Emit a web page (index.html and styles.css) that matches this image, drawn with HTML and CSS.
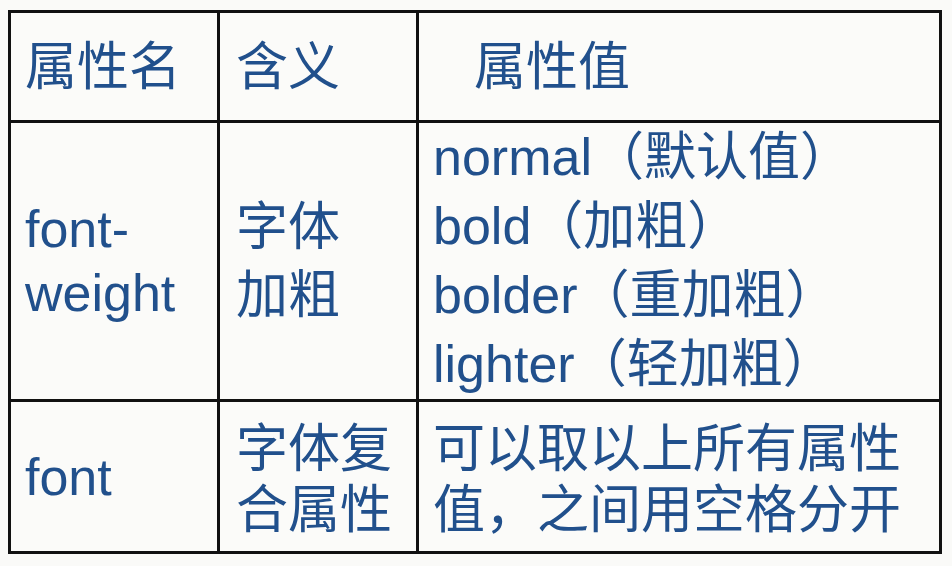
FILE: index.html
```html
<!DOCTYPE html>
<html lang="zh-CN">
<head>
<meta charset="utf-8">
<title>font-weight</title>
<link rel="stylesheet" href="styles.css">
</head>
<body>
<table class="props">
  <colgroup>
    <col class="c1">
    <col class="c2">
    <col class="c3">
  </colgroup>
  <tr class="head">
    <td class="p1">属性名</td>
    <td class="p2">含义</td>
    <td class="p3 indent">属性值</td>
  </tr>
  <tr class="r2">
    <td class="p1 lh64">font-<br>weight</td>
    <td class="p2 lh68">字体<br>加粗</td>
    <td class="p3 lh69">normal（默认值）<br>bold（加粗）<br>bolder（重加粗）<br>lighter（轻加粗）</td>
  </tr>
  <tr class="r3">
    <td class="p1">font</td>
    <td class="p2 lh61 low">字体复<br>合属性</td>
    <td class="p3 lh61 low">可以取以上所有属性<br>值，之间用空格分开</td>
  </tr>
</table>
</body>
</html>
```

FILE: styles.css
```css
html, body {
  margin: 0;
  padding: 0;
  background: #fafaf8;
}

body {
  padding: 10px 0 0 8px;
  font-family: "Liberation Sans", "Noto Sans CJK SC", sans-serif;
  color: #21508c;
}

.props {
  border-collapse: collapse;
  table-layout: fixed;
  width: 931px;
  background: #fbfbf9;
  font-size: 52px;
}

.props col.c1 { width: 209px; }
.props col.c2 { width: 199px; }
.props col.c3 { width: 523px; }

.props td {
  border: 3px solid #111;
  vertical-align: middle;
  padding: 0;
  white-space: nowrap;
  line-height: 60px;
}

.props tr.head { height: 110px; }
.props tr.r2 { height: 279px; }
.props tr.r3 { height: 152px; }

.p1 { padding-left: 14px !important; }
.p2 { padding-left: 16px !important; }
.p3 { padding-left: 14px !important; }
.p3.indent { padding-left: 55px !important; }

.low { padding-top: 6px !important; }

.lh64 { line-height: 64px !important; }
.lh68 { line-height: 68px !important; }
.lh69 { line-height: 69px !important; }
.lh61 { line-height: 61px !important; }
```
